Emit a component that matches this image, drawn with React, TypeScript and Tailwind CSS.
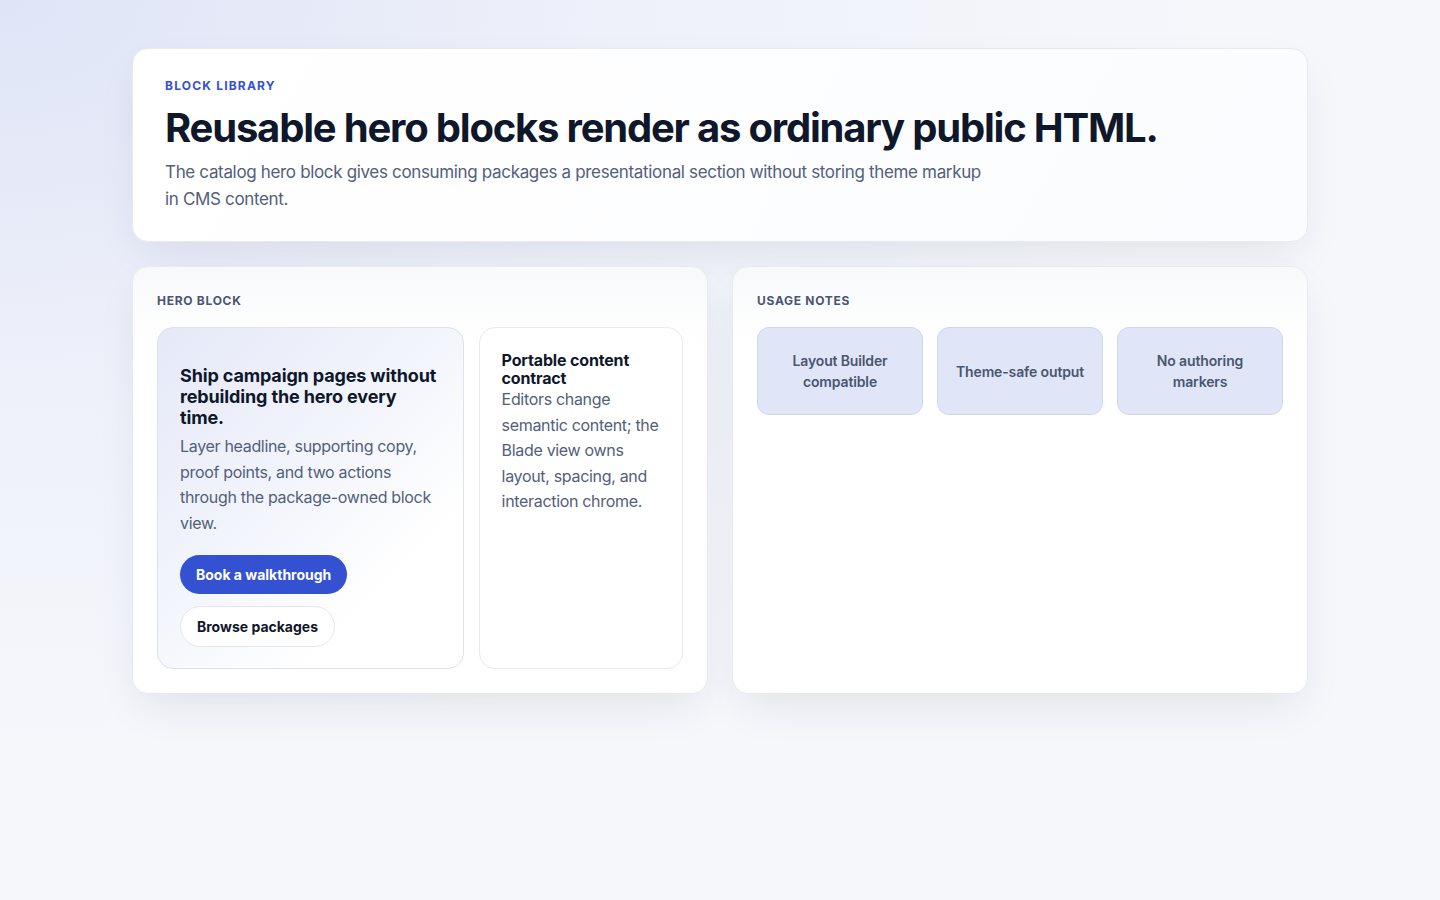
export default function App() {
  const notes = ["Layout Builder compatible", "Theme-safe output", "No authoring markers"];

  return (
    <div
      className="min-h-screen w-full bg-[#f6f7fb] bg-[radial-gradient(ellipse_at_top_left,#dfe4f7_0%,#eef1fa_30%,transparent_60%)] font-['Inter','Liberation_Sans',sans-serif]"
    >
      <main className="mx-auto w-[1176px] pt-12 pb-16">
        {/* Intro card */}
        <section className="rounded-2xl border border-[#e8eaf0] bg-[linear-gradient(120deg,#ffffff,#fbfcff)] px-8 pt-[29px] pb-[28px] shadow-[0_18px_45px_-10px_rgba(30,41,80,0.10)]">
          <p className="text-xs font-bold uppercase leading-4 tracking-[0.1em] text-[#3451d1]">
            Block library
          </p>
          <h1 className="mt-3 text-[40px] font-bold leading-[44px] tracking-[-0.03em] text-[#0f172a]">
            Reusable hero blocks render as ordinary public HTML.
          </h1>
          <p className="mt-[9px] max-w-[830px] text-[17px] leading-[27px] tracking-[-0.02em] text-[#52607a]">
            The catalog hero block gives consuming packages a presentational section without storing theme markup
            in CMS content.
          </p>
        </section>

        <div className="mt-6 grid grid-cols-2 gap-6">
          {/* Hero block card */}
          <section className="rounded-2xl border border-[#e8eaf0] bg-[linear-gradient(180deg,#f8f9fb_0%,#ffffff_18%)] px-6 pt-[26px] pb-6 shadow-[0_18px_45px_-10px_rgba(30,41,80,0.10)]">
            <h2 className="text-xs font-bold uppercase leading-4 tracking-[0.06em] text-[#4a5670]">Hero block</h2>
            <div className="mt-[18px] grid grid-cols-[3fr_2fr] gap-[15px]">
              <div className="rounded-2xl border border-[#dde2f0] bg-[linear-gradient(135deg,#e5e9f8_0%,#f3f5fc_45%,#ffffff_75%)] px-[22px] pt-[37px] pb-[21px]">
                <h3 className="text-lg font-bold leading-[21px] tracking-[-0.008em] text-[#0f172a]">
                  Ship campaign pages without rebuilding the hero every time.
                </h3>
                <p className="mt-1.5 text-base leading-[25.5px] tracking-[-0.02em] text-[#52607a]">
                  Layer headline, supporting copy, proof points, and two actions through the package-owned block view.
                </p>
                <div className="mt-[19px] flex flex-wrap gap-3">
                  <button className="h-[39px] rounded-full bg-[#3451d1] px-4 text-sm font-bold text-white">
                    Book a walkthrough
                  </button>
                  <button className="h-[41px] rounded-full border border-[#e5e7ef] bg-white px-4 text-sm font-bold text-[#0f172a]">
                    Browse packages
                  </button>
                </div>
              </div>
              <div className="rounded-2xl border border-[#e8eaf0] bg-white px-[22px] pt-[23px]">
                <h3 className="text-base font-bold leading-[18px] tracking-[-0.01em] text-[#0f172a]">Portable content contract</h3>
                <p className="text-base leading-[25.5px] tracking-[-0.02em] text-[#52607a]">
                  Editors change semantic content; the Blade view owns layout, spacing, and interaction chrome.
                </p>
              </div>
            </div>
          </section>

          {/* Usage notes card */}
          <section className="rounded-2xl border border-[#e8eaf0] bg-[linear-gradient(180deg,#f8f9fb_0%,#ffffff_18%)] px-6 pt-[26px] pb-6 shadow-[0_18px_45px_-10px_rgba(30,41,80,0.10)]">
            <h2 className="text-xs font-bold uppercase leading-4 tracking-[0.06em] text-[#4a5670]">Usage notes</h2>
            <div className="mt-[18px] grid grid-cols-3 gap-[14px]">
              {notes.map((n) => (
                <div
                  key={n}
                  className="flex h-[88px] items-center justify-center rounded-xl border border-[#cfd7f0] bg-[#e0e6f8] px-3 text-center text-sm font-semibold leading-[21px] tracking-[-0.01em] text-[#4a5670]"
                >
                  {n}
                </div>
              ))}
            </div>
          </section>
        </div>
      </main>
    </div>
  );
}
